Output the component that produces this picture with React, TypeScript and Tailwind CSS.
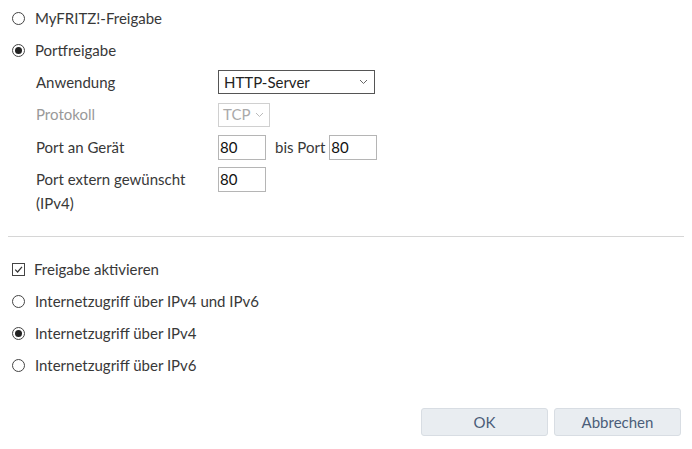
import React from "react";

function Radio({ checked, label }: { checked?: boolean; label: string }) {
  return (
    <div className="flex h-8 items-center">
      <span className="ml-[12px] mr-[10px] flex h-[13px] w-[13px] items-center justify-center rounded-full border border-[#444]">
        {checked ? <span className="h-[7px] w-[7px] rounded-full bg-[#222]" /> : null}
      </span>
      <span>{label}</span>
    </div>
  );
}

function Chevron({ color }: { color: string }) {
  return (
    <svg width="9" height="6" viewBox="0 0 9 6" className="shrink-0">
      <path d="M1 1 L4.5 4.5 L8 1" fill="none" stroke={color} strokeWidth="1" />
    </svg>
  );
}

function PortInput({ value }: { value: string }) {
  return (
    <div className="flex h-[25px] w-[48px] items-center border border-[#b5b5b5] pl-[1px] text-[#111]">
      {value}
    </div>
  );
}

export default function App() {
  return (
    <div
      className="w-[692px] h-[449px] bg-white text-[15px] text-[#383838]"
      style={{ fontFamily: '"Source Sans Pro", Lato, sans-serif' }}
    >
      <div className="pt-[2px]">
        <Radio label="MyFRITZ!-Freigabe" />
        <Radio checked label="Portfreigabe" />

        <div className="pl-[36px]">
          <div className="flex h-8 items-center">
            <span className="w-[182px]">Anwendung</span>
            <div className="flex h-[24px] w-[157px] items-center justify-between border border-[#555] pl-[5px] pr-[6px] text-[#222]">
              <span>HTTP-Server</span>
              <Chevron color="#666" />
            </div>
          </div>
          <div className="flex h-[33px] items-center">
            <span className="w-[182px] text-[#999]">Protokoll</span>
            <div className="flex h-[24px] w-[52px] items-center justify-between border border-[#d0d0d0] pl-[4px] pr-[5px] text-[#aaa]">
              <span>TCP</span>
              <Chevron color="#bbb" />
            </div>
          </div>
          <div className="flex h-8 items-center">
            <span className="w-[182px]">Port an Gerät</span>
            <PortInput value="80" />
            <span className="ml-[9px] mr-[4px]">bis Port</span>
            <PortInput value="80" />
          </div>
          <div className="mt-[4px] flex">
            <span className="w-[182px] leading-6">
              Port extern gewünscht
              <br />
              (IPv4)
            </span>
            <PortInput value="80" />
          </div>
        </div>

        <div className="mx-[8px] mt-[21px] border-t border-[#d6d6d6]" />

        <div className="mt-[16px]">
          <div className="flex h-8 items-center">
            <span className="ml-[12px] mr-[9px] flex h-[13px] w-[13px] items-center justify-center border border-[#444]">
              <svg width="11" height="11" viewBox="0 0 11 11">
                <path d="M2.2 5.6 L4.6 8 L9 2.8" fill="none" stroke="#333" strokeWidth="1.2" />
              </svg>
            </span>
            <span>Freigabe aktivieren</span>
          </div>
          <Radio label="Internetzugriff über IPv4 und IPv6" />
          <Radio checked label="Internetzugriff über IPv4" />
          <Radio label="Internetzugriff über IPv6" />
        </div>

        <div className="mt-[27px] flex justify-end gap-[6px] pr-[11px]">
          <button className="h-[28px] w-[127px] rounded-[3px] border border-[#d8dde3] bg-[#e9edf1] text-[#4b5d79]">
            OK
          </button>
          <button className="h-[28px] w-[127px] rounded-[3px] border border-[#d8dde3] bg-[#e9edf1] text-[#4b5d79]">
            Abbrechen
          </button>
        </div>
      </div>
    </div>
  );
}
